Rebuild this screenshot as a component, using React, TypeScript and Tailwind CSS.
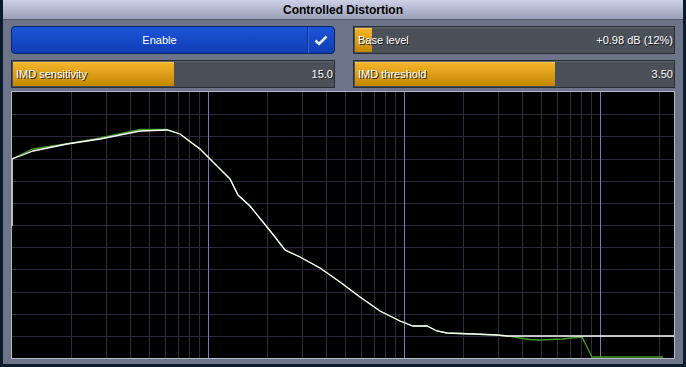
import React from 'react';

const GW = 662;
const GH = 266;
const DECADE = 196;

const vLines: { x: number; major: boolean }[] = [];
for (let d = 0; d < 4; d++) {
  for (let k = 2; k <= 10; k++) {
    const x = DECADE * d + DECADE * Math.log10(k);
    if (x < GW) vLines.push({ x, major: k === 10 });
  }
}
const hLines = Array.from({ length: 11 }, (_, i) => ((i + 1) * GH) / 12);

const white = [
  [0, 134], [0, 67], [8, 64], [21, 59], [55, 52], [88, 47], [128, 39], [155, 38],
  [168, 42], [188, 57], [198, 67], [218, 87], [226, 103], [238, 114], [255, 135],
  [263, 145], [273, 158], [288, 165], [308, 176], [328, 190], [348, 205], [368, 219],
  [388, 229], [401, 234], [415, 234], [425, 239], [435, 241], [461, 242], [485, 243],
  [495, 244], [662, 244],
];

const green = [
  [0, 134], [0, 67], [8, 63], [21, 57], [40, 54], [60, 51], [88, 46], [128, 37.5], [155, 37.5],
  [168, 42], [188, 57], [198, 67], [218, 87], [226, 103], [238, 114], [255, 135],
  [263, 145], [273, 158], [288, 165], [308, 176], [328, 190], [348, 205], [368, 219],
  [388, 229], [401, 234], [415, 234], [425, 239], [435, 241], [461, 242], [485, 243],
  [495, 244], [503, 245], [508, 246], [518, 247.5], [528, 248], [550, 247], [560, 246],
  [570, 245], [580, 265], [651, 265],
];

const pts = (p: number[][]) => p.map(([x, y]) => `${x},${y}`).join(' ');

interface SliderProps {
  label: string;
  value: string;
  fill: number;
}

const Slider: React.FC<SliderProps> = ({ label, value, fill }) => (
  <div className="relative h-[28px] bg-[#4b5159] border border-[#2a2e34] shadow-[inset_0_1px_0_#5d636b]">
    <div
      className="absolute left-[1px] top-[1px] bottom-[1px] bg-gradient-to-b from-[#f4b428] to-[#c48800] border-t border-[#f8c850]"
      style={{ width: fill }}
    />
    <div className="relative flex h-full items-center justify-between pl-[4px] pr-[1px] text-[11px] text-white [text-shadow:1px_1px_0_#1a1a1a]">
      <span>{label}</span>
      <span>{value}</span>
    </div>
  </div>
);

export default function App() {
  return (
    <div className="w-[686px] h-[367px] bg-[#0c1b2b] pl-[3px] font-['Liberation_Sans',Arial,sans-serif]">
      <div className="w-[680px] h-[364px] bg-[#6c7489] flex flex-col">
        <div className="h-[20px] bg-gradient-to-b from-[#cdd1e6] to-[#9aa0b9] border-b border-[#565c6c] flex items-center justify-center text-[12px] font-bold text-black">
          Controlled Distortion
        </div>
        <div className="px-[8px] pt-[6px] flex flex-col">
          <div className="grid grid-cols-[324px_322px] gap-x-[18px] gap-y-[6px]">
            <div className="h-[28px] rounded-[4px] bg-gradient-to-b from-[#1d55d8] to-[#0f3db4] border border-[#0a2266] flex text-white text-[11px]">
              <div className="flex-1 flex items-center justify-center">Enable</div>
              <div className="w-[27px] border-l border-[#0b2c8c] shadow-[inset_1px_0_0_#3a6ae0] flex items-center justify-center">
                <svg width="14" height="11" viewBox="0 0 14 11">
                  <path d="M1.5 5.5 L5 9 L12.5 1.5" fill="none" stroke="#e4ecff" strokeWidth="2.6" />
                </svg>
              </div>
            </div>
            <Slider label="Base level" value="+0.98 dB (12%)" fill={17} />
            <Slider label="IMD sensitivity" value="15.0" fill={161} />
            <Slider label="IMD threshold" value="3.50" fill={200} />
          </div>
          <div className="mt-[3px] w-[664px] h-[268px] border border-[#b4b8c6] bg-black">
            <svg width={GW} height={GH} viewBox={`0 0 ${GW} ${GH}`} className="block">
              {hLines.map((y) => (
                <line key={`h${y}`} x1={0} x2={GW} y1={Math.round(y) + 0.5} y2={Math.round(y) + 0.5} stroke="#2a2838" strokeWidth="1" />
              ))}
              {vLines.map((l) => (
                <line
                  key={`v${l.x}`}
                  x1={Math.round(l.x) + 0.5}
                  x2={Math.round(l.x) + 0.5}
                  y1={0}
                  y2={GH}
                  stroke={l.major ? '#7b7bbd' : '#2e2c3e'}
                  strokeWidth="1"
                />
              ))}
              <polyline points={pts(green)} fill="none" stroke="#3f9a25" strokeWidth="1.3" />
              <polyline points={pts(white)} fill="none" stroke="#ffffff" strokeWidth="1.3" />
            </svg>
          </div>
        </div>
      </div>
    </div>
  );
}
